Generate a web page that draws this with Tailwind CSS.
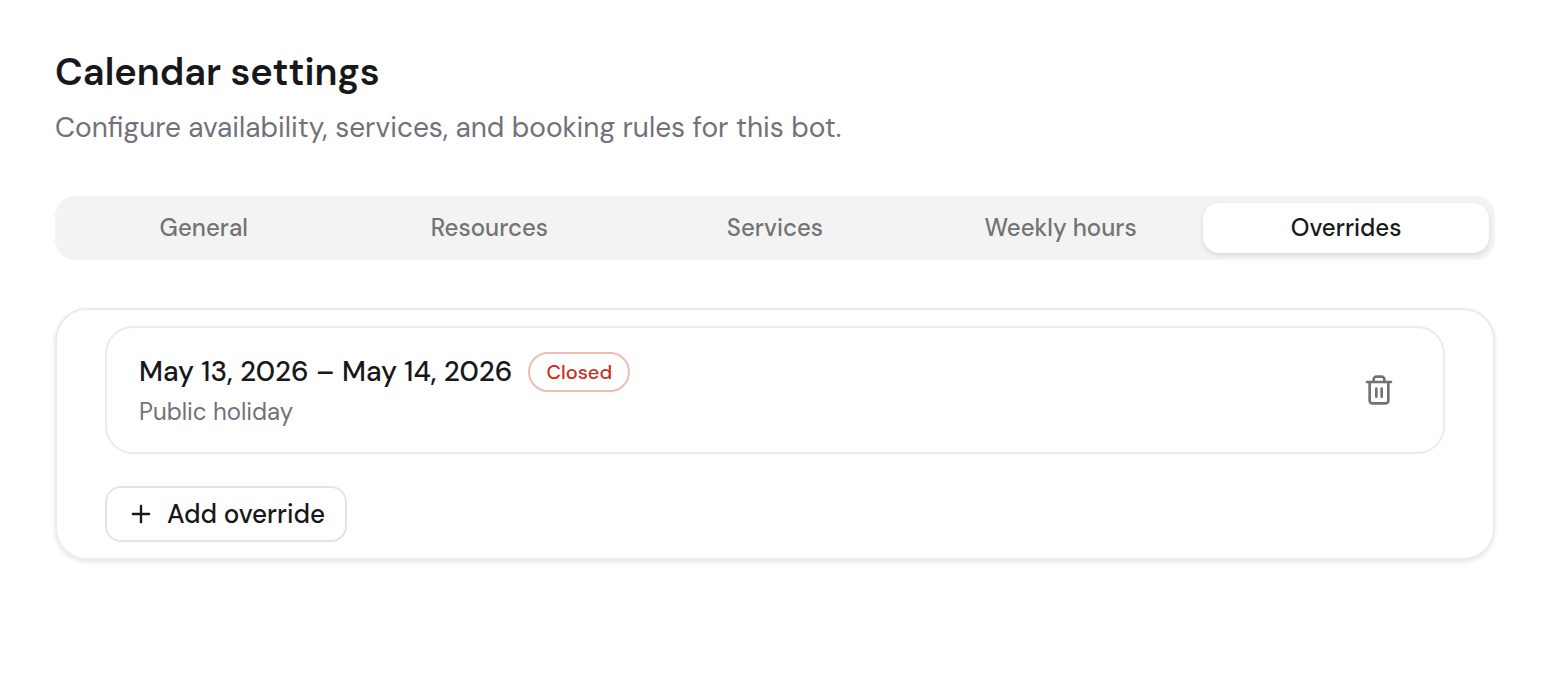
<!DOCTYPE html>
<html lang="en">
<head>
  <meta charset="UTF-8" />
  <meta name="viewport" content="width=device-width, initial-scale=1.0"/>
  <title>Calendar settings</title>
  <script src="https://cdn.jsdelivr.net/npm/@tailwindcss/browser@4"></script>
</head>
<body class="bg-white text-[#18181a] font-['DM_Sans',Roboto,sans-serif]">
  <main class="pt-12 pb-12 pl-[55px] pr-[63px]">
    <header>
      <h1 class="text-[38px] leading-[48px] font-semibold">Calendar settings</h1>
      <p class="mt-3 text-[28px] leading-[40px] text-[#71717a]">Configure availability, services, and booking rules for this bot.</p>
    </header>

    <div role="tablist" class="mt-12 grid grid-cols-5 h-16 px-[6px] py-[7px] rounded-[20px] bg-[#f3f3f3] text-[24px] leading-[32px] font-medium text-[#737373]">
      <button type="button" role="tab" aria-selected="false" class="rounded-2xl">General</button>
      <button type="button" role="tab" aria-selected="false" class="rounded-2xl">Resources</button>
      <button type="button" role="tab" aria-selected="false" class="rounded-2xl">Services</button>
      <button type="button" role="tab" aria-selected="false" class="rounded-2xl">Weekly hours</button>
      <button type="button" role="tab" aria-selected="true" class="rounded-2xl bg-white text-[#18181a] shadow-[0_2px_4px_rgba(0,0,0,0.12)]">Overrides</button>
    </div>

    <section role="tabpanel" class="mt-12 border-2 border-[#ebebeb] rounded-[32px] px-12 py-4 shadow-[0_2px_5px_rgba(0,0,0,0.1)]">
      <div class="flex items-center justify-between border-2 border-[#ebebeb] rounded-[28px] px-8 py-6">
        <div>
          <div class="flex items-center gap-4">
            <span class="text-[28px] leading-[40px] font-medium">May 13, 2026 – May 14, 2026</span>
            <span class="flex items-center h-10 px-4 border-2 border-[#f1bbb5] rounded-full text-[20px] leading-[28px] font-medium text-[#c9301c]">Closed</span>
          </div>
          <p class="mt-1 text-[24px] leading-[32px] text-[#71717a]">Public holiday</p>
        </div>
        <button type="button" aria-label="Delete override" class="flex items-center justify-center size-16 rounded-2xl text-[#71717a]">
          <svg class="size-8" viewBox="0 0 24 24" fill="none" stroke="currentColor" stroke-width="2" stroke-linecap="round" stroke-linejoin="round">
            <path d="M3 6h18"/>
            <path d="M19 6v14c0 1-1 2-2 2H7c-1 0-2-1-2-2V6"/>
            <path d="M8 6V4c0-1 1-2 2-2h4c1 0 2 1 2 2v2"/>
            <path d="M10 11v6"/>
            <path d="M14 11v6"/>
          </svg>
        </button>
      </div>

      <button type="button" class="mt-8 flex items-center gap-3 h-14 px-5 border-2 border-[#e4e4e4] rounded-2xl text-[26px] leading-[36px] font-medium">
        <svg class="size-7" viewBox="0 0 24 24" fill="none" stroke="currentColor" stroke-width="2" stroke-linecap="round" stroke-linejoin="round">
          <path d="M5 12h14"/>
          <path d="M12 5v14"/>
        </svg>
        Add override
      </button>
    </section>
  </main>
</body>
</html>
